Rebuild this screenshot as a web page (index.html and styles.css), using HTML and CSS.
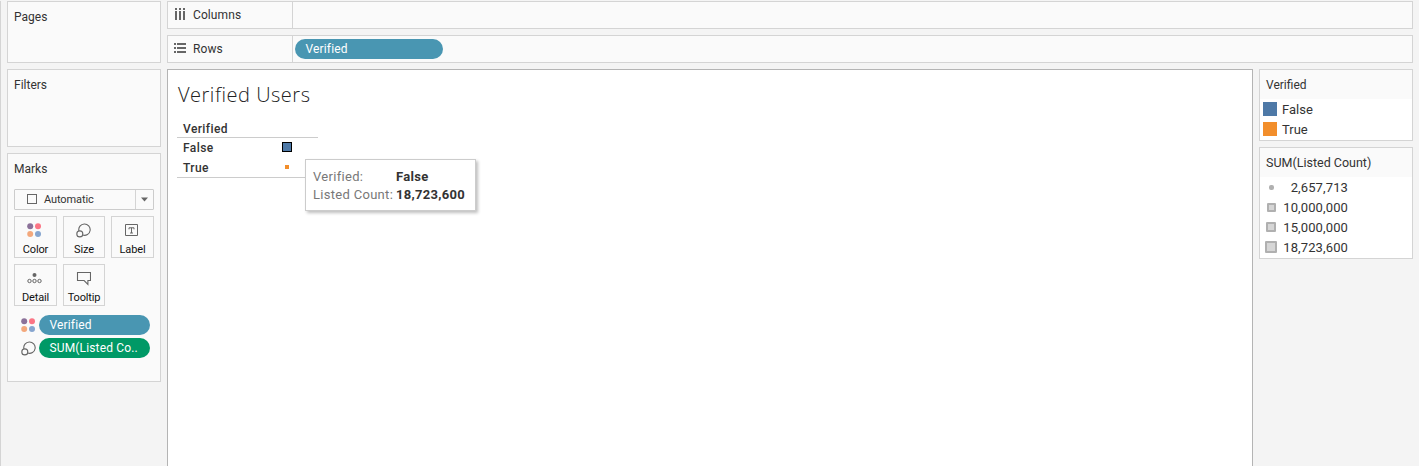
FILE: index.html
```html
<!DOCTYPE html>
<html lang="en">
<head>
<meta charset="utf-8">
<title>Verified Users</title>
<link rel="stylesheet" href="styles.css">
</head>
<body>
<svg class="defs" width="0" height="0">
  <symbol id="dots" viewBox="0 0 15 15"><circle cx="3.2" cy="3.2" r="3" fill="#8b7199"/><circle cx="11" cy="3.2" r="3" fill="#fb7585"/><circle cx="3.2" cy="11" r="3" fill="#f3a87c"/><circle cx="11" cy="11" r="3" fill="#86a5cf"/></symbol>
  <symbol id="size" viewBox="0 0 15 15"><g fill="none" stroke="#666" stroke-width="1.1"><path d="M2.9 7.9A5.7 5.7 0 1 1 6.7 12.1"/><circle cx="3.8" cy="10.9" r="3"/></g></symbol>
</svg>
<div class="app">
  <aside class="cards">
    <section class="card pages"><h2>Pages</h2></section>
    <section class="card filters"><h2>Filters</h2></section>
    <section class="card marks">
      <h2>Marks</h2>
      <div class="select">
        <span class="square"></span><span class="choice">Automatic</span>
        <span class="arrow"><svg width="7" height="5"><path d="M0 .5h7L3.5 4.5z" fill="#666"/></svg></span>
      </div>
      <div class="buttons">
        <div class="button"><svg width="15" height="15"><use href="#dots"/></svg><span>Color</span></div>
        <div class="button"><svg width="15" height="15"><use href="#size"/></svg><span>Size</span></div>
        <div class="button"><svg width="15" height="15"><path d="M1.5 1.5h12v11h-12zM5 6.3V4.8h5v1.5M7.5 4.8v5.2M6 10h3" fill="none" stroke="#666"/></svg><span>Label</span></div>
        <div class="button"><svg width="15" height="15"><circle cx="7.5" cy="4" r="2" fill="#666"/><g fill="none" stroke="#666"><circle cx="2.5" cy="10" r="1.7"/><circle cx="7.5" cy="10" r="1.7"/><circle cx="12.5" cy="10" r="1.7"/></g></svg><span>Detail</span></div>
        <div class="button"><svg width="15" height="15"><path d="M1.5 1.5h13v8h-2.6v3.9L8.1 9.5H1.5z" fill="none" stroke="#666" stroke-width="1.1"/></svg><span>Tooltip</span></div>
      </div>
      <div class="encodings">
        <div class="encoding"><svg width="15" height="15"><use href="#dots"/></svg><span class="pill blue">Verified</span></div>
        <div class="encoding"><svg width="15" height="15"><use href="#size"/></svg><span class="pill green">SUM(Listed Co..</span></div>
      </div>
    </section>
  </aside>
  <main class="workspace">
    <div class="shelf">
      <div class="shelf-name"><svg width="12" height="13"><path d="M1 0h2v2H1zM5 0h2v2H5zM9 0h2v2H9zM1 3h2v9H1zM5 3h2v9H5zM9 3h2v9H9z" fill="#666"/></svg><span>Columns</span></div>
    </div>
    <div class="shelf">
      <div class="shelf-name"><svg width="12" height="13"><path d="M0 1h2v2H0zM3 1h9v2H3zM0 5h2v2H0zM3 5h9v2H3zM0 9h2v2H0zM3 9h9v2H3z" fill="#666"/></svg><span>Rows</span></div>
      <span class="pill blue wide">Verified</span>
    </div>
    <div class="content">
      <section class="sheet">
        <h1>Verified Users</h1>
        <div class="table">
          <div class="head">Verified</div>
          <div class="row"><span>False</span><i class="mark selected"></i></div>
          <div class="row"><span>True</span><i class="mark small"></i></div>
          <div class="tooltip">
            <span class="key">Verified:</span><b>False</b>
            <span class="key">Listed Count:</span><b>18,723,600</b>
          </div>
        </div>
      </section>
      <aside class="legends">
        <section class="legend color-legend">
          <h3>Verified</h3>
          <div class="item"><i class="swatch false"></i><span>False</span></div>
          <div class="item"><i class="swatch true"></i><span>True</span></div>
        </section>
        <section class="legend size-legend">
          <h3>SUM(Listed Count)</h3>
          <div class="item"><span class="shape"><i class="s1"></i></span><span class="num">2,657,713</span></div>
          <div class="item"><span class="shape"><i class="s2"></i></span><span class="num">10,000,000</span></div>
          <div class="item"><span class="shape"><i class="s3"></i></span><span class="num">15,000,000</span></div>
          <div class="item"><span class="shape"><i class="s4"></i></span><span class="num">18,723,600</span></div>
        </section>
      </aside>
    </div>
  </main>
</div>
</body>
</html>
```
FILE: styles.css
```css
* { box-sizing: border-box; }
body { margin: 0; height: 466px; overflow: hidden; background: #f4f4f4; color: #333; font: 12px/16px Roboto, "Liberation Sans", sans-serif; }
h1, h2, h3 { margin: 0; font-weight: 400; }
svg { display: block; flex: none; }
.defs { position: absolute; }
.app { display: flex; gap: 6px; height: 465px; margin-top: 1px; padding: 0 6px; border-left: 1px solid #d4d4d4; }
.cards { display: flex; flex-direction: column; gap: 6px; width: 154px; flex: none; }
.card { border: 1px solid #d4d4d4; background: #fafafa; padding: 7px 6px; }
.card h2 { font-size: 12px; line-height: 17px; }
.pages { height: 62px; }
.filters { height: 78px; }
.marks { height: 229px; }
.select { display: flex; align-items: center; height: 21px; margin-top: 11px; border: 1px solid #ccc; border-radius: 1px; font-size: 11px; letter-spacing: -.1px; }
.square { width: 10px; height: 10px; margin: 0 0 1px 12px; border: 1px solid #666; }
.choice { margin-left: 7px; flex: 1; }
.arrow { display: flex; align-items: center; justify-content: center; width: 18px; height: 19px; border-left: 1px solid #d4d4d4; }
.buttons { display: grid; grid-template-columns: 43px 42px 43px; column-gap: 6px; row-gap: 6px; margin-top: 6px; }
.button { display: flex; flex-direction: column; align-items: center; height: 42px; padding-top: 6px; border: 1px solid #d4d4d4; color: #111; font-size: 11px; line-height: 14px; }
.button svg { margin-right: 2px; }
.button span { margin-top: 5px; white-space: nowrap; letter-spacing: -.15px; }
.encodings { display: flex; flex-direction: column; gap: 3px; margin-top: 9px; padding-left: 7px; }
.encoding { display: flex; align-items: center; gap: 3px; height: 20px; }
.pill { width: 111px; height: 20px; padding-left: 10.5px; border-radius: 10px; color: #fff; font-size: 12px; line-height: 20px; letter-spacing: .15px; white-space: nowrap; }
.blue { background: #4996b2; }
.green { background: #009966; }
.wide { width: 148px; margin-left: 2px; }
.workspace { display: flex; flex-direction: column; gap: 6px; flex: 1; min-width: 0; }
.shelf { display: flex; align-items: center; height: 28px; flex: none; border: 1px solid #d4d4d4; background: #fafafa; }
.shelf-name { display: flex; align-items: center; gap: 7px; width: 125px; height: 26px; padding-left: 6px; border-right: 1px solid #d4d4d4; font-size: 12px; letter-spacing: .1px; }
.shelf-name svg { margin-bottom: 1px; }
.content { display: flex; gap: 6px; flex: 1; min-height: 0; }
.sheet { flex: 1; padding: 11px 9px; border: 1px solid #b4b4b4; border-bottom: 0; background: #fff; }
h1 { padding-left: 1px; color: #222; font-family: "Open Sans", sans-serif; font-size: 20px; line-height: 28px; font-weight: 300; letter-spacing: .52px; }
.table { position: relative; width: 141px; height: 60px; margin-top: 9px; border-bottom: 1px solid #ccc; color: #333; font-weight: 500; letter-spacing: .4px; }
.head { height: 20px; padding: 3px 0 0 6px; border-bottom: 1px solid #ccc; }
.row { display: flex; align-items: center; justify-content: space-between; height: 20px; padding: 0 26px 0 6px; }
.mark { width: 10px; height: 10px; margin-bottom: 2px; }
.selected { border: 1px solid #000; background: #4e79a7; }
.small { width: 4px; height: 4px; margin-right: 3px; background: #f28e2b; }
.tooltip { position: absolute; left: 128px; top: 41px; display: grid; grid-template-columns: 83px auto; grid-auto-rows: 18px; width: 171px; height: 52px; padding: 8px 0 0 7px; border: 1px solid #ccc; background: #fff; box-shadow: 2px 2px 3px rgba(0,0,0,.25); font-size: 13px; line-height: 18px; font-weight: 400; letter-spacing: .3px; white-space: nowrap; }
.key { color: #787878; }
.tooltip b { font-weight: 700; color: #333; }
.legends { display: flex; flex-direction: column; gap: 6px; width: 154px; }
.legend { border: 1px solid #d4d4d4; background: #fff; }
.color-legend { height: 72px; }
.size-legend { height: 112px; }
.legend h3 { height: 29px; padding-left: 6px; background: #fafafa; font-size: 12.5px; line-height: 30px; }
.color-legend h3 { font-size: 12px; }
.item { display: flex; align-items: center; height: 20px; padding-left: 3px; font-size: 13px; }
.item > span:last-child { padding-top: 2px; }
.swatch { width: 14px; height: 14px; margin-right: 5px; }
.false { background: #4e79a7; }
.true { background: #f28e2b; }
.shape { display: flex; align-items: center; justify-content: center; width: 16px; margin-right: -1px; }
.shape i { border: 2px solid #b0b0b0; border-radius: 1px; background: #d6d6d6; }
.shape .s1 { width: 5px; height: 5px; border-radius: 2px; background: #b0b0b0; }
.s2 { width: 9px; height: 9px; }
.s3 { width: 10px; height: 10px; }
.s4 { width: 12px; height: 12px; }
.num { width: 70px; text-align: right; letter-spacing: .12px; }
```
